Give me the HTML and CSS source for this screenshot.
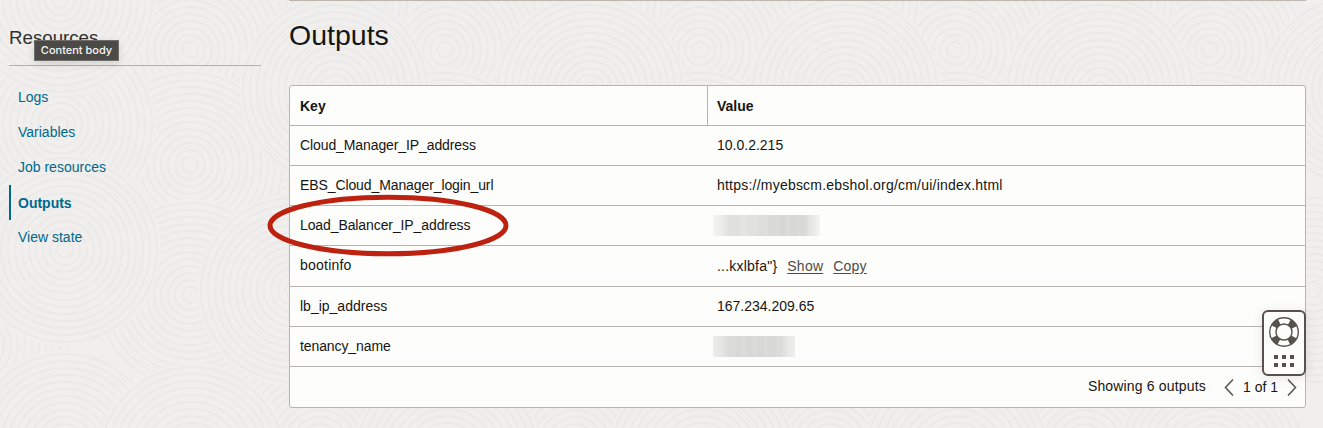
FILE: index.html
```html
<!DOCTYPE html>
<html lang="en">
<head>
<meta charset="utf-8">
<title>Outputs</title>
<link rel="stylesheet" href="styles.css">
</head>
<body>
<svg class="texture" width="1323" height="428" aria-hidden="true">
  <defs>
    <g id="rings">
      <circle r="96" class="disk"/>
      <circle r="92"/><circle r="85"/><circle r="78"/><circle r="71"/><circle r="64"/><circle r="57"/><circle r="50"/><circle r="43"/><circle r="36"/><circle r="29"/><circle r="22"/><circle r="15"/><circle r="8"/>
    </g>
    <g id="cluster">
      <use href="#rings" x="190" y="50"/>
      <use href="#rings" x="190" y="165"/>
      <use href="#rings" x="190" y="295"/>
      <use href="#rings" x="-25" y="345"/>
      <use href="#rings" x="335" y="90"/>
      <use href="#rings" x="60" y="125"/>
      <use href="#rings" x="60" y="0"/>
      <use href="#rings" x="65" y="250"/>
      <use href="#rings" x="65" y="446"/>
      <use href="#rings" x="293" y="290"/>
      <use href="#rings" x="192" y="459"/>
    </g>
  </defs>
  <use href="#cluster" x="1020"/>
  <use href="#cluster" x="765"/>
  <use href="#cluster" x="510"/>
  <use href="#cluster" x="255"/>
  <use href="#cluster"/>
</svg>
<div class="page">
  <aside class="sidebar">
    <h2 class="sidebar-title">Resources</h2>
    <span class="tooltip">Content body</span>
    <nav class="nav">
      <a class="nav-item">Logs</a>
      <a class="nav-item">Variables</a>
      <a class="nav-item">Job resources</a>
      <a class="nav-item active">Outputs</a>
      <a class="nav-item">View state</a>
    </nav>
  </aside>
  <main class="content">
    <h1 class="title">Outputs</h1>
    <section class="table">
      <div class="row head"><div class="key">Key</div><div class="value">Value</div></div>
      <div class="row"><div class="key snug">Cloud_Manager_IP_address</div><div class="value">10.0.2.215</div></div>
      <div class="row"><div class="key snug">EBS_Cloud_Manager_login_url</div><div class="value wide-text">https://myebscm.ebshol.org/cm/ui/index.html</div></div>
      <div class="row"><div class="key snug">Load_Balancer_IP_address</div><div class="value"><span class="redacted wide"></span></div></div>
      <div class="row tall"><div class="key wide-text">bootinfo</div><div class="value wide-text"><span>...kxlbfa"}</span><a class="link">Show</a><a class="link">Copy</a></div></div>
      <div class="row"><div class="key">lb_ip_address</div><div class="value">167.234.209.65</div></div>
      <div class="row"><div class="key snug">tenancy_name</div><div class="value"><span class="redacted"></span></div></div>
      <div class="footer">
        <span class="count">Showing 6 outputs</span>
        <svg class="chevron" width="10" height="18" viewBox="0 0 10 18"><path d="M9 1.500 1.500 9.500 9 17.500"/></svg>
        <span class="pages">1 of 1</span>
        <svg class="chevron" width="10" height="18" viewBox="0 0 10 18"><path d="M1 1.500 8.500 9.500 1 17.500"/></svg>
      </div>
    </section>
  </main>
</div>
<svg class="highlight" width="244" height="66" viewBox="0 0 244 66"><ellipse cx="122" cy="32.500" rx="118" ry="28.300"/></svg>
<div class="help">
  <svg width="32" height="32" viewBox="0 0 32 32">
    <g fill="none" stroke="#57524e">
      <circle cx="16" cy="16" r="11.200" stroke-width="6.500" stroke-dasharray="7.200 10.393" stroke-dashoffset="-5.200"/>
      <circle cx="16" cy="16" r="14.300" stroke-width="1.400"/>
      <circle cx="16" cy="16" r="8" stroke-width="1.400"/>
    </g>
  </svg>
  <div class="dots"><i></i><i></i><i></i><i></i><i></i><i></i></div>
</div>
</body>
</html>
```
FILE: styles.css
```css
* { box-sizing: border-box; }
body {
  margin: 0;
  width: 1323px;
  height: 428px;
  overflow: hidden;
  position: relative;
  background: #f0efed;
  color: #161513;
  font: 14px/20px "Liberation Sans", Arial, sans-serif;
}
.texture { position: absolute; left: 0; top: 0; fill: none; stroke: #ebeae8; stroke-width: 2; }
.disk { fill: #f0efed; stroke: none; }
.page { position: relative; display: flex; padding-left: 9px; gap: 28px; }
.sidebar { position: relative; width: 252px; }
.sidebar-title {
  margin: 0;
  height: 66px;
  padding-top: 26px;
  border-bottom: 1px solid #b3b1ae;
  font-size: 18.7px;
  line-height: 24px;
  font-weight: 400;
  color: #33312f;
}
.tooltip {
  position: absolute;
  left: 25px;
  top: 40px;
  width: 85px;
  height: 21px;
  border: 1px solid #6f6e6b;
  background: #4b4a47;
  color: #f7f6f4;
  font: 500 11px/19px Inter, sans-serif;
  text-align: center;
  box-shadow: 0 3px 8px rgba(0, 0, 0, .12);
}
.nav { display: flex; flex-direction: column; padding-top: 14px; }
.nav-item {
  height: 35px;
  padding-left: 9px;
  line-height: 35px;
  color: #00688c;
}
.nav-item.active { padding-left: 7px; border-left: 2px solid #00688c; font-weight: 700; line-height: 36px; }
.content { width: 1017px; height: 408px; border-top: 1px solid #bdb5ae; }
.title { margin: 0; padding-top: 17px; height: 84px; font-size: 28.5px; line-height: 34px; font-weight: 400; }
.table { border: 1px solid #b7b4b0; border-radius: 3px; background: #fdfdfb; height: 323px; }
.row { display: flex; height: 40px; border-bottom: 1px solid #b7b4b0; line-height: 39px; }
.row.tall { height: 41px; }
.row.tall .value { line-height: 41px; }
.key { width: 417px; padding-left: 10px; }
.value { display: flex; gap: 10px; padding-left: 10px; }
.snug { letter-spacing: -.1px; }
.wide-text { letter-spacing: .22px; }
.head { font-weight: 700; line-height: 41px; }
.head .value { border-left: 1px solid #b7b4b0; padding-left: 9px; }
.link { color: #4c4a47; text-decoration: underline; text-underline-offset: 2px; }
.redacted {
  width: 82px;
  height: 21px;
  margin: 9px 0 0 -4px;
  background: repeating-linear-gradient(90deg, transparent 0 7px, rgba(255, 255, 255, .08) 7px 11px), linear-gradient(90deg, #ededeb, #d9d9d8 22%, #d7d7d6 78%, #efefee);
}
.redacted.wide {
  width: 107px;
  margin-left: -4px;
  background: repeating-linear-gradient(90deg, transparent 0 7px, rgba(255, 255, 255, .08) 7px 11px), linear-gradient(90deg, #f5f5f4, #dededd 18%, #e3e3e2 30%, #d8d8d7 60%, #d7d7d6 84%, #f5f5f4);
}
.footer { display: flex; justify-content: flex-end; align-items: center; height: 40px; padding-right: 8px; }
.count { margin: -1px 18px 1px 0; letter-spacing: .17px; }
.pages { margin: 0 9px; }
.chevron { fill: none; stroke: #5c5855; stroke-width: 1.6; }
.highlight { position: absolute; left: 266px; top: 193px; fill: none; stroke: #bd2110; stroke-width: 5; }
.help {
  position: absolute;
  left: 1262px;
  top: 310px;
  width: 44px;
  height: 66px;
  border: 2px solid #57524e;
  border-radius: 6px;
  background: #fdfdfb;
  display: flex;
  flex-direction: column;
  align-items: center;
  padding-top: 4px;
  gap: 7px;
  box-shadow: 0 2px 12px rgba(0, 0, 0, .1);
}
.dots { display: grid; grid-template-columns: repeat(3, 4px); gap: 4px; }
.dots i { width: 4px; height: 4px; background: #57524e; }
```
